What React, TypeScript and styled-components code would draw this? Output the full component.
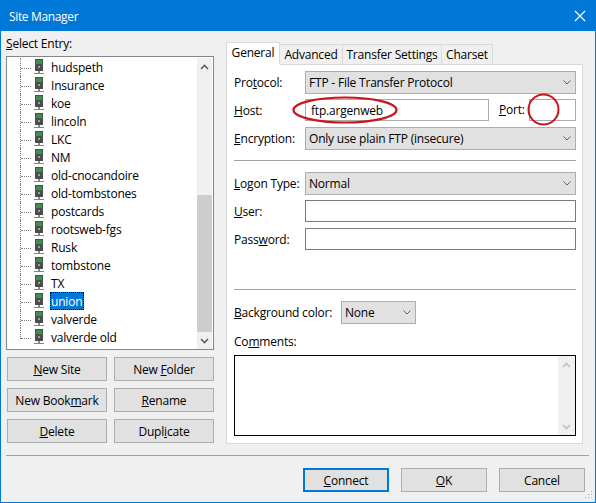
import { ReactNode } from 'react'
import styled, { createGlobalStyle, css } from 'styled-components'

const Global = createGlobalStyle`
  html, body {
    margin: 0;
    padding: 0;
    background: #f0f0f0;
  }
  * {
    box-sizing: border-box;
  }
`

const Frame = styled.div`
  position: relative;
  width: 596px;
  height: 503px;
  display: flex;
  flex-direction: column;
  background: #f0f0f0;
  border: solid #0078d7;
  border-width: 0 1px 1px 1px;
  font-family: 'Open Sans', 'Noto Sans', sans-serif;
  font-size: 12px;
  letter-spacing: -0.2px;
  color: #000;
`

const TitleBar = styled.div`
  height: 31px;
  flex: none;
  margin: 0 -1px;
  padding: 0 10px 0 9px;
  display: flex;
  align-items: center;
  justify-content: space-between;
  background: #0078d7;
  color: #fff;
`

const TitleText = styled.span`
  margin-top: 1px;
  letter-spacing: -0.35px;
`

const Main = styled.div`
  height: 412px;
  flex: none;
  display: flex;
  gap: 12px;
  padding: 6px 13px 0 5px;
`

const LeftPane = styled.div`
  width: 208px;
  flex: none;
  display: flex;
  flex-direction: column;
`

const EntryLabel = styled.div`
  height: 20px;
  line-height: 14px;
`

const TreeBox = styled.div`
  height: 294px;
  flex: none;
  display: flex;
  background: #fff;
  border: 1px solid #828790;
  padding: 1px 1px 0 0;
`

const TreeList = styled.div`
  flex: 1;
  overflow: hidden;
`

const TreeRow = styled.div`
  height: 18px;
  display: flex;
  align-items: center;
`

const Connector = styled.div<{ $last?: boolean }>`
  width: 28px;
  margin-left: 13px;
  flex: none;
  align-self: flex-start;
  height: ${p => (p.$last ? '11px' : '18px')};
  position: relative;
  border-left: 1px dotted #808080;

  &::after {
    content: '';
    position: absolute;
    left: 0;
    top: 10px;
    width: 10px;
    border-top: 1px dotted #808080;
  }
`

const SiteIconBox = styled.svg`
  margin-left: -15px;
  width: 12px;
  height: 18px;
  flex: none;
`

const RowLabel = styled.span<{ $selected?: boolean }>`
  margin-left: 5px;
  padding: 0 2px 0 1px;
  line-height: 20px;
  height: 18px;
  ${p =>
    p.$selected &&
    css`
      background: #0078d7;
      color: #fff;
      outline: 1px dotted #000;
      outline-offset: -1px;
    `}
`

const ScrollBar = styled.div<{ $faint?: boolean }>`
  width: ${p => (p.$faint ? '17px' : '15px')};
  flex: none;
  display: flex;
  flex-direction: column;
  background: #f0f0f0;
  color: ${p => (p.$faint ? '#c0c0c0' : '#606060')};
`

const ScrollArrow = styled.div`
  height: 17px;
  flex: none;
  display: flex;
  align-items: center;
  justify-content: center;
`

const ScrollTrack = styled.div`
  flex: 1;
  display: flex;
  flex-direction: column;
  justify-content: flex-end;
`

const ScrollThumb = styled.div`
  height: 137px;
  background: #cdcdcd;
`

const ButtonGrid = styled.div`
  display: grid;
  grid-template-columns: 100px 100px;
  grid-auto-rows: 24px;
  justify-content: space-between;
  padding: 0 0 0 1px;
  gap: 7px;
  margin-top: 7px;
`

const Button = styled.div<{ $primary?: boolean }>`
  display: flex;
  align-items: center;
  justify-content: center;
  background: #e1e1e1;
  border: ${p => (p.$primary ? '2px solid #0078d7' : '1px solid #adadad')};
`

const RightPane = styled.div`
  width: 357px;
  flex: none;
  display: flex;
  flex-direction: column;
`

const TabBar = styled.div`
  height: 28px;
  flex: none;
  display: flex;
  align-items: flex-end;
  margin-bottom: -1px;
  position: relative;
  z-index: 1;
`

const Tab = styled.div<{ $active?: boolean; $width: number }>`
  width: ${p => p.$width}px;
  height: ${p => (p.$active ? '23px' : '21px')};
  padding-bottom: ${p => (p.$active ? '3px' : '0')};
  display: flex;
  align-items: center;
  justify-content: center;
  background: ${p => (p.$active ? '#fff' : '#f0f0f0')};
  border: 1px solid #d9d9d9;
  border-left-width: ${p => (p.$active ? '1px' : '0')};
  border-bottom-color: ${p => (p.$active ? '#fff' : '#d9d9d9')};
`

const Panel = styled.div`
  height: 380px;
  flex: none;
  display: flex;
  flex-direction: column;
  background: #fff;
  border: 1px solid #d9d9d9;
  padding: 6px 6px 0 7px;
`

const FormGrid = styled.div`
  display: grid;
  grid-template-columns: 71px 1fr;
  grid-auto-rows: 23px;
  align-items: center;
  row-gap: 5px;
`

const FieldLabel = styled.div`
  line-height: 16px;
`

const Select = styled.div<{ $width?: number }>`
  height: 23px;
  padding: 0 4px 0 3px;
  display: flex;
  align-items: center;
  justify-content: space-between;
  background: #e1e1e1;
  border: 1px solid #adadad;
  color: #000;
  ${p => p.$width && `width: ${p.$width}px;`}
`

const Chevron = styled.svg`
  width: 8px;
  height: 5px;
  flex: none;
`

const Input = styled.div`
  height: 22px;
  align-self: start;
  flex: 1;
  padding: 0 5px;
  display: flex;
  align-items: center;
  background: #fff;
  border: 1px solid #7a7a7a;
`

const HostRow = styled.div`
  display: flex;
  align-items: flex-start;
  height: 23px;
`

const HostInput = styled(Input)`
  flex: none;
  width: 184px;
  border-color: #ababab;
`

const PortLabel = styled(FieldLabel)`
  margin: 3px 0 0 10px;
  width: 30px;
`

const PortInput = styled(Input)`
  border-color: #ababab;
`

const Rule = styled.div<{ $top: number; $bottom: number }>`
  height: 1px;
  flex: none;
  background: #a0a0a0;
  margin: ${p => p.$top}px 0 ${p => p.$bottom}px;
`

const ColorRow = styled.div`
  display: flex;
  align-items: center;
`

const ColorLabel = styled(FieldLabel)`
  width: 107px;
`

const CommentsLabel = styled(FieldLabel)`
  margin: 10px 0 5px;
`

const CommentsBox = styled.div`
  height: 81px;
  display: flex;
  justify-content: flex-end;
  background: #fff;
  border: 1px solid #000;
`

const Footer = styled.div`
  flex: none;
  margin: 12px 6px 0 5px;
  padding: 12px 4px 0 0;
  border-top: 1px solid #a0a0a0;
  display: flex;
  justify-content: flex-end;
  gap: 12px;
`

const FooterButton = styled(Button)`
  width: 86px;
  height: 24px;
`

const Annotation = styled.svg`
  position: absolute;
  left: -1px;
  top: 0;
  pointer-events: none;
`

const Grip = styled.svg`
  position: absolute;
  right: 2px;
  bottom: 2px;
  width: 10px;
  height: 10px;
`

const sites = [
  'hudspeth',
  'Insurance',
  'koe',
  'lincoln',
  'LKC',
  'NM',
  'old-cnocandoire',
  'old-tombstones',
  'postcards',
  'rootsweb-fgs',
  'Rusk',
  'tombstone',
  'TX',
  'union',
  'valverde',
  'valverde old',
]

const SiteIcon = () => (
  <SiteIconBox viewBox="0 0 12 18">
    <rect x="2" y="1" width="8" height="12" fill="#4a4f4c" />
    <rect x="3" y="2" width="6" height="4" fill="#3f8f4f" />
    <rect x="5" y="8" width="2" height="2" fill="#9aa09c" />
    <rect x="5" y="13" width="2" height="3" fill="#7f8a90" />
    <rect x="1" y="15" width="10" height="1" fill="#5f90b0" />
  </SiteIconBox>
)

const Down = () => (
  <Chevron viewBox="0 0 8 5">
    <path d="M0.5 0.5L4 4L7.5 0.5" fill="none" stroke="#606060" strokeWidth="1" />
  </Chevron>
)

const ScrollChevron = ({ up }: { up?: boolean }) => (
  <svg width="9" height="6" viewBox="0 0 9 6">
    <path
      d={up ? 'M1 5L4.5 1.5L8 5' : 'M1 1L4.5 4.5L8 1'}
      fill="none"
      stroke="currentColor"
      strokeWidth="1.6"
    />
  </svg>
)

const Bar = ({ faint, children }: { faint?: boolean; children?: ReactNode }) => (
  <ScrollBar $faint={faint}>
    <ScrollArrow>
      <ScrollChevron up />
    </ScrollArrow>
    <ScrollTrack>{children}</ScrollTrack>
    <ScrollArrow>
      <ScrollChevron />
    </ScrollArrow>
  </ScrollBar>
)

export default function App() {
  return (
    <Frame>
      <Global />
      <TitleBar>
        <TitleText>Site Manager</TitleText>
        <svg width="12" height="12" viewBox="0 0 12 12">
          <path d="M1 1L11 11M11 1L1 11" stroke="#fff" strokeWidth="1.1" />
        </svg>
      </TitleBar>
      <Main>
        <LeftPane>
          <EntryLabel>
            <u>S</u>elect Entry:
          </EntryLabel>
          <TreeBox>
            <TreeList>
              {sites.map((site, i) => (
                <TreeRow key={site}>
                  <Connector $last={i === sites.length - 1} />
                  <SiteIcon />
                  <RowLabel $selected={site === 'union'}>{site}</RowLabel>
                </TreeRow>
              ))}
            </TreeList>
            <Bar>
              <ScrollThumb />
            </Bar>
          </TreeBox>
          <ButtonGrid>
            <Button>
              <span>
                <u>N</u>ew Site
              </span>
            </Button>
            <Button>
              <span>
                New <u>F</u>older
              </span>
            </Button>
            <Button>
              <span>
                New Book<u>m</u>ark
              </span>
            </Button>
            <Button>
              <span>
                <u>R</u>ename
              </span>
            </Button>
            <Button>
              <span>
                <u>D</u>elete
              </span>
            </Button>
            <Button>
              <span>
                Dupl<u>i</u>cate
              </span>
            </Button>
          </ButtonGrid>
        </LeftPane>
        <RightPane>
          <TabBar>
            <Tab $active $width={54}>
              General
            </Tab>
            <Tab $width={63}>Advanced</Tab>
            <Tab $width={99}>Transfer Settings</Tab>
            <Tab $width={51}>Charset</Tab>
          </TabBar>
          <Panel>
            <FormGrid>
              <FieldLabel>
                Pro<u>t</u>ocol:
              </FieldLabel>
              <Select>
                FTP - File Transfer Protocol
                <Down />
              </Select>
              <FieldLabel>
                <u>H</u>ost:
              </FieldLabel>
              <HostRow>
                <HostInput>ftp.argenweb</HostInput>
                <PortLabel>
                  <u>P</u>ort:
                </PortLabel>
                <PortInput />
              </HostRow>
              <FieldLabel>
                <u>E</u>ncryption:
              </FieldLabel>
              <Select>
                Only use plain FTP (insecure)
                <Down />
              </Select>
            </FormGrid>
            <Rule $top={10} $bottom={11} />
            <FormGrid>
              <FieldLabel>
                <u>L</u>ogon Type:
              </FieldLabel>
              <Select>
                Normal
                <Down />
              </Select>
              <FieldLabel>
                <u>U</u>ser:
              </FieldLabel>
              <Input />
              <FieldLabel>
                Pass<u>w</u>ord:
              </FieldLabel>
              <Input />
            </FormGrid>
            <Rule $top={38} $bottom={11} />
            <ColorRow>
              <ColorLabel>
                <u>B</u>ackground color:
              </ColorLabel>
              <Select $width={75}>
                None
                <Down />
              </Select>
            </ColorRow>
            <CommentsLabel>
              Co<u>m</u>ments:
            </CommentsLabel>
            <CommentsBox>
              <Bar faint />
            </CommentsBox>
          </Panel>
        </RightPane>
      </Main>
      <Footer>
        <FooterButton $primary>
          <span>
            <u>C</u>onnect
          </span>
        </FooterButton>
        <FooterButton>
          <span>
            <u>O</u>K
          </span>
        </FooterButton>
        <FooterButton>Cancel</FooterButton>
      </Footer>
      <Annotation width="596" height="503" viewBox="0 0 596 503">
        <ellipse cx="345" cy="110" rx="51.5" ry="12.5" fill="none" stroke="#c8141c" strokeWidth="2.2" />
        <circle cx="543.5" cy="109.5" r="15" fill="none" stroke="#c8141c" strokeWidth="2" />
      </Annotation>
      <Grip viewBox="0 0 10 10">
        <path d="M8 1h1v1H8zM5 4h1v1H5zM8 4h1v1H8zM2 7h1v1H2zM5 7h1v1H5zM8 7h1v1H8z" fill="#b0b0b0" />
      </Grip>
    </Frame>
  )
}
